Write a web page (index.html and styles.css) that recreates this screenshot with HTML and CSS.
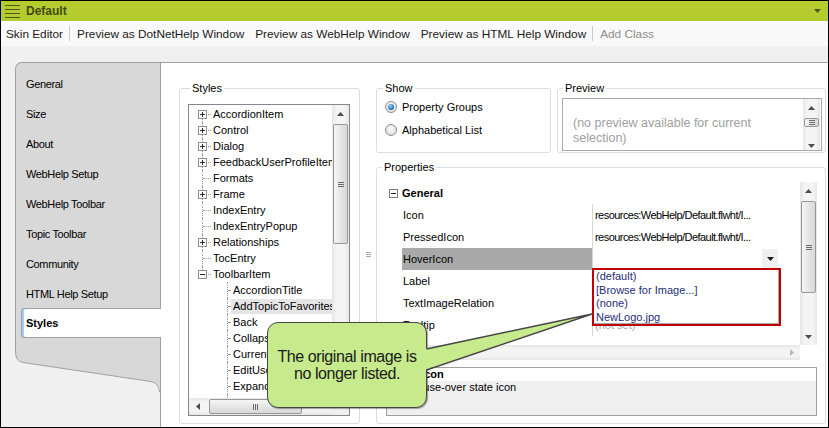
FILE: index.html
```html
<!DOCTYPE html>
<html>
<head>
<meta charset="utf-8">
<title>Default - Skin Editor</title>
<link rel="stylesheet" href="styles.css">
</head>
<body>
<div class="app">
  <header class="titlebar">
    <svg class="menu" width="15" height="14" viewBox="0 0 15 14"><path d="M0 1.5H15M0 5.5H15M0 9.5H15M0 13.5H15" stroke="#4b5816" stroke-width="1"/></svg>
    <span class="title">Default</span>
    <svg class="tb-arrow" width="7" height="4" viewBox="0 0 7 4"><path d="M0 0H7L3.5 4Z" fill="#4b5816"/></svg>
  </header>

  <nav class="toolbar">
    <span class="tool">Skin Editor</span>
    <span class="sep"></span>
    <span class="tool">Preview as DotNetHelp Window</span>
    <span class="tool">Preview as WebHelp Window</span>
    <span class="tool">Preview as HTML Help Window</span>
    <span class="sep"></span>
    <span class="tool disabled">Add Class</span>
  </nav>

  <main class="main">
    <aside class="tabs">
      <ul class="tablist">
        <li class="tab">General</li>
        <li class="tab">Size</li>
        <li class="tab">About</li>
        <li class="tab">WebHelp Setup</li>
        <li class="tab">WebHelp Toolbar</li>
        <li class="tab">Topic Toolbar</li>
        <li class="tab">Community</li>
        <li class="tab">HTML Help Setup</li>
        <li class="tab active">Styles</li>
      </ul>
      <svg class="tail" width="145" height="46" viewBox="0 0 145 46">
        <path d="M0 0V6Q0.5 15 8 16.5L136 35.5Q144 37 145 44V0Z" fill="#d8d8d8"/>
        <path d="M0.5 0V6Q0.5 15 8 16.5L136 35.5Q144 37 144.5 46" fill="none" stroke="#a0a0a0" stroke-width="1"/>
      </svg>
    </aside>

    <section class="content">
      <div class="group styles-group">
        <div class="legend">Styles</div>
        <div class="treebox">
          <div class="tree">
            <div class="node"><span class="br first"><i class="pm plus"></i></span><span class="lbl">AccordionItem</span></div>
            <div class="node"><span class="br"><i class="pm plus"></i></span><span class="lbl">Control</span></div>
            <div class="node"><span class="br"><i class="pm plus"></i></span><span class="lbl">Dialog</span></div>
            <div class="node"><span class="br"><i class="pm plus"></i></span><span class="lbl">FeedbackUserProfileItem</span></div>
            <div class="node"><span class="br"></span><span class="lbl">Formats</span></div>
            <div class="node"><span class="br"><i class="pm plus"></i></span><span class="lbl">Frame</span></div>
            <div class="node"><span class="br"></span><span class="lbl">IndexEntry</span></div>
            <div class="node"><span class="br"></span><span class="lbl">IndexEntryPopup</span></div>
            <div class="node"><span class="br"><i class="pm plus"></i></span><span class="lbl">Relationships</span></div>
            <div class="node"><span class="br"></span><span class="lbl">TocEntry</span></div>
            <div class="node"><span class="br last"><i class="pm minus"></i></span><span class="lbl">ToolbarItem</span></div>
            <div class="node"><span class="br none"></span><span class="br l1"></span><span class="lbl">AccordionTitle</span></div>
            <div class="node"><span class="br none"></span><span class="br l1"></span><span class="lbl hot">AddTopicToFavorites</span></div>
            <div class="node"><span class="br none"></span><span class="br l1"></span><span class="lbl">Back</span></div>
            <div class="node"><span class="br none"></span><span class="br l1"></span><span class="lbl">CollapseAll</span></div>
            <div class="node"><span class="br none"></span><span class="br l1"></span><span class="lbl">CurrentTopicIndex</span></div>
            <div class="node"><span class="br none"></span><span class="br l1"></span><span class="lbl">EditUserProfile</span></div>
            <div class="node"><span class="br none"></span><span class="br l1"></span><span class="lbl">ExpandAll</span></div>
            <div class="node"><span class="br none"></span><span class="br l1"></span><span class="lbl">Favorites</span></div>
          </div>
          <div class="vs tree-vs">
            <span class="sb"><svg width="7" height="4" viewBox="0 0 7 4"><path d="M0 4L3.5 0L7 4Z" fill="#4d4d4d"/></svg></span>
            <span class="thumb v"><svg width="6" height="5" viewBox="0 0 6 5"><path d="M0 0.5H6M0 2.5H6M0 4.5H6" stroke="#6a6a6a" stroke-width="1"/></svg></span>
          </div>
          <div class="hs tree-hs">
            <span class="sb"><svg width="4" height="7" viewBox="0 0 4 7"><path d="M4 0L0 3.5L4 7Z" fill="#4d4d4d"/></svg></span>
            <span class="thumb h"><svg width="5" height="6" viewBox="0 0 5 6"><path d="M0.5 0V6M2.5 0V6M4.5 0V6" stroke="#6a6a6a" stroke-width="1"/></svg></span>
          </div>
          <div class="corner"></div>
        </div>
      </div>

      <div class="splitter"><svg width="5" height="5" viewBox="0 0 5 5"><path d="M0 0.5H5M0 2.5H5M0 4.5H5" stroke="#a8a8a8" stroke-width="1"/></svg></div>

      <div class="rightcol">
        <div class="toprow">
          <div class="group show-group">
            <div class="legend">Show</div>
            <div class="radio-row"><span class="radio on"></span>Property Groups</div>
            <div class="radio-row"><span class="radio"></span>Alphabetical List</div>
          </div>
          <div class="group preview-group">
            <div class="legend">Preview</div>
            <div class="previewbox">
              <div class="preview-text">(no preview available for current selection)</div>
              <div class="vs preview-vs">
                <span class="sb up"><svg width="7" height="4" viewBox="0 0 7 4"><path d="M0 4L3.5 0L7 4Z" fill="#4d4d4d"/></svg></span>
                <span class="thumb v small"><svg width="6" height="5" viewBox="0 0 6 5"><path d="M0 0.5H6M0 2.5H6M0 4.5H6" stroke="#6a6a6a" stroke-width="1"/></svg></span>
                <span class="spacer"></span>
                <span class="sb down"><svg width="7" height="4" viewBox="0 0 7 4"><path d="M0 0H7L3.5 4Z" fill="#4d4d4d"/></svg></span>
              </div>
            </div>
          </div>
        </div>

        <div class="group props-group">
          <div class="legend">Properties</div>
          <div class="pgrid">
            <div class="prows">
              <div class="cat"><span class="pmbox"></span>General</div>
              <div class="prow"><span class="pname">Icon</span><span class="pval">resources:WebHelp/Default.flwht/I...</span></div>
              <div class="prow"><span class="pname">PressedIcon</span><span class="pval">resources:WebHelp/Default.flwht/I...</span></div>
              <div class="prow sel"><span class="pname">HoverIcon</span><span class="pval"><span class="ddbtn"><svg width="7" height="4" viewBox="0 0 7 4"><path d="M0 0H7L3.5 4Z" fill="#1a1a1a"/></svg></span></span></div>
              <div class="prow"><span class="pname">Label</span><span class="pval"></span></div>
              <div class="prow"><span class="pname">TextImageRelation</span><span class="pval"></span></div>
              <div class="prow"><span class="pname">Tooltip</span><span class="pval notset">(not set)</span></div>
            </div>
            <div class="vs props-vs">
              <span class="sb"><svg width="7" height="4" viewBox="0 0 7 4"><path d="M0 4L3.5 0L7 4Z" fill="#4d4d4d"/></svg></span>
              <span class="thumb v tall"><svg width="6" height="5" viewBox="0 0 6 5"><path d="M0 0.5H6M0 2.5H6M0 4.5H6" stroke="#6a6a6a" stroke-width="1"/></svg></span>
              <span class="spacer"></span>
              <span class="sb"><svg width="7" height="4" viewBox="0 0 7 4"><path d="M0 0H7L3.5 4Z" fill="#4d4d4d"/></svg></span>
            </div>
            <div class="hs props-hs">
              <span class="sb"><svg width="4" height="7" viewBox="0 0 4 7"><path d="M0 0L4 3.5L0 7Z" fill="#b8b8b8"/></svg></span>
            </div>
            <div class="corner white"></div>
          </div>
          <div class="desc">
            <div class="desc-title">HoverIcon</div>
            <div class="desc-text">Mouse-over state icon</div>
          </div>
        </div>
      </div>
    </section>
  </main>

  <div class="ddlist">
    <div>(default)</div>
    <div>[Browse for Image...]</div>
    <div>(none)</div>
    <div>NewLogo.jpg</div>
  </div>

  <div class="callout">The original image is<br>no longer listed.</div>
  <svg class="pointer" width="180" height="70" viewBox="0 0 180 70">
    <polygon points="4,41 172,6 4,62" fill="#c6ea8c"/>
    <path d="M6.5 41L172 6L6.5 62" fill="none" stroke="#464646" stroke-width="1.5" stroke-linejoin="round"/>
  </svg>
</div>
</body>
</html>
```

FILE: styles.css
```css
body {
  margin: 0;
}

.app {
  position: relative;
  width: 829px;
  height: 428px;
  box-sizing: border-box;
  border: 1px solid #000;
  overflow: hidden;
  display: flex;
  flex-direction: column;
  background: #f0f0f0;
  font-family: "Liberation Sans", Arial, sans-serif;
  font-size: 11px;
  color: #000;
}

/* title bar */
.titlebar {
  flex: none;
  height: 20px;
  display: flex;
  align-items: center;
  padding-left: 4px;
  background: #b5cc2e;
}
.menu { display: block; margin-right: 6px; }
.title { font-weight: bold; font-size: 12px; color: #3f4a0e; }
.tb-arrow { display: block; margin-left: auto; margin-right: 7px; }

/* toolbar */
.toolbar {
  flex: none;
  height: 25px;
  display: flex;
  align-items: center;
  background: #f9f9f9;
  font-size: 11.8px;
  color: #1a1a1a;
}
.tool { padding: 0 5px; margin-right: 1px; white-space: nowrap; }
.tool.disabled { color: #8d8d8d; }
.sep { width: 1px; height: 15px; background: #c9c9c9; margin: 0 2px 0 0; }

/* main */
.main {
  flex: 1;
  min-height: 0;
  display: flex;
  padding: 16px 0 0 14px;
}

.tabs {
  flex: none;
  width: 146px;
  box-sizing: border-box;
  border-right: 1px solid #a0a0a0;
  display: flex;
  flex-direction: column;
}
.tablist {
  list-style: none;
  margin: 0;
  padding: 6px 0 0;
  height: 284px;
  box-sizing: border-box;
  background: #d8d8d8;
  border-top: 1px solid #a0a0a0;
  border-left: 1px solid #a0a0a0;
  border-top-left-radius: 7px;
}
.tab {
  height: 30px;
  line-height: 30px;
  padding-left: 10px;
  letter-spacing: -0.35px;
  white-space: nowrap;
}
.tab.active {
  position: relative;
  height: 30px;
  box-sizing: border-box;
  line-height: 28px;
  margin: -1px -1px 0 5px;
  padding-left: 4px;
  background: #fff;
  border: 1px solid #a0a0a0;
  border-right: none;
  border-radius: 3px 0 0 3px;
  box-shadow: inset 2px 0 0 #9fcdf5;
  font-weight: bold;
  letter-spacing: 0;
}
.tail { display: block; }

/* content */
.content {
  flex: 1;
  min-width: 0;
  box-sizing: border-box;
  background: #fff;
  border-top: 1px solid #a0a0a0;
  padding: 25px 2px 3px 18px;
  display: grid;
  grid-template-columns: 181px 16px 450px;
}

.group {
  box-sizing: border-box;
  border: 1px solid #d5dfe5;
  border-radius: 3px;
  display: flex;
  flex-direction: column;
  min-width: 0;
}
.legend {
  align-self: flex-start;
  height: 14px;
  line-height: 14px;
  margin-top: -8px;
  padding: 0 2px;
  background: #fff;
  white-space: nowrap;
}

/* styles tree */
.styles-group { padding: 0 9px 0 8px; }
.styles-group .legend { margin-left: 2px; }
.treebox {
  margin-top: 9px;
  height: 312px;
  box-sizing: border-box;
  border: 1px solid #828790;
  display: grid;
  grid-template-columns: 1fr 17px;
  grid-template-rows: 1fr 17px;
  min-height: 0;
}
.tree {
  overflow: hidden;
  padding-top: 1px;
  min-width: 0;
}
.node {
  display: flex;
  height: 16px;
  align-items: center;
  padding-left: 7px;
  white-space: nowrap;
}
.br {
  position: relative;
  flex: none;
  width: 15px;
  height: 16px;
}
.br::before {
  content: "";
  position: absolute;
  left: 6px;
  top: 0;
  bottom: 0;
  border-left: 1px dotted #9a9a9a;
}
.br::after {
  content: "";
  position: absolute;
  left: 7px;
  right: 0;
  top: 8px;
  border-top: 1px dotted #9a9a9a;
}
.br.first::before { top: 8px; }
.br.last::before { bottom: 8px; }
.br.none::before,
.br.none::after { display: none; }
.br.l1 { width: 20px; }
.br.l1::before { left: 16px; }
.br.l1::after { left: 17px; right: 1px; }
.pm {
  position: absolute;
  z-index: 1;
  left: 2px;
  top: 4px;
  width: 9px;
  height: 9px;
  box-sizing: border-box;
  border: 1px solid #919191;
  background: #fff;
}
.pm::before {
  content: "";
  position: absolute;
  left: 1px;
  top: 3px;
  width: 5px;
  height: 1px;
  background: #2b2b2b;
}
.pm.plus::after {
  content: "";
  position: absolute;
  left: 3px;
  top: 1px;
  width: 1px;
  height: 5px;
  background: #2b2b2b;
}
.lbl { padding-left: 2px; padding-right: 2px; line-height: 15px; }
.lbl.hot { background: #e5e5e5; }

/* scrollbars */
.vs {
  display: flex;
  flex-direction: column;
  background: linear-gradient(to right, #e6e6e6, #f4f4f4 25%, #f4f4f4 75%, #e6e6e6);
  min-height: 0;
  overflow: hidden;
}
.hs {
  display: flex;
  background: linear-gradient(to bottom, #e6e6e6, #f4f4f4 25%, #f4f4f4 75%, #e6e6e6);
  min-width: 0;
  overflow: hidden;
}
.sb {
  flex: none;
  height: 17px;
  display: flex;
  align-items: center;
  justify-content: center;
}
.hs .sb { width: 17px; height: auto; }
.thumb {
  flex: none;
  box-sizing: border-box;
  border: 1px solid #979797;
  border-radius: 2px;
  display: flex;
  align-items: center;
  justify-content: center;
}
.thumb.v {
  margin: 0 1px;
  background: linear-gradient(to right, #f5f5f5, #e6e6e6 50%, #d8d8d8);
}
.thumb.h {
  margin: 1px 0 1px 3px;
  width: 93px;
  background: linear-gradient(to bottom, #f5f5f5, #e6e6e6 50%, #d8d8d8);
}
.tree-vs .thumb { margin-top: 2px; height: 120px; }
.spacer { flex: 1; }
.corner { background: #f0f0f0; }
.corner.white { background: #fff; }

.splitter {
  display: flex;
  align-items: center;
  justify-content: center;
  padding-bottom: 4px;
}

/* right column */
.rightcol {
  display: flex;
  flex-direction: column;
  gap: 14px;
  min-height: 0;
}
.toprow {
  flex: none;
  height: 65px;
  display: flex;
  gap: 6px;
}
.show-group { width: 175px; flex: none; }
.show-group .legend { margin-left: 6px; }
.radio-row {
  display: flex;
  align-items: center;
  height: 23px;
  padding-left: 8px;
  white-space: nowrap;
}
.radio {
  flex: none;
  width: 12px;
  height: 12px;
  box-sizing: border-box;
  margin-right: 5px;
  border-radius: 50%;
  border: 1px solid #8f8f8f;
  background: radial-gradient(circle at 50% 40%, #fbfbfb, #d6d6d6);
  display: flex;
  align-items: center;
  justify-content: center;
}
.radio.on::after {
  content: "";
  width: 6px;
  height: 6px;
  border-radius: 50%;
  background: radial-gradient(circle at 40% 35%, #9ad6ff, #1c72bd 65%, #0e4f8e);
}

.preview-group { flex: 1; min-width: 0; }
.preview-group .legend { margin-left: 5px; }
.previewbox {
  margin: 3px 3px 0 4px;
  height: 53px;
  box-sizing: border-box;
  border: 1px solid #a9a9a9;
  display: flex;
}
.preview-text {
  flex: 1;
  min-width: 0;
  overflow: hidden;
  padding: 17px 0 0 10px;
  font-size: 12.5px;
  line-height: 15px;
  color: #a0a0a0;
}
.preview-vs { flex: none; width: 17px; margin-right: 1px; }
.preview-vs .sb.up { height: 18px; }
.preview-vs .thumb { margin-top: 1px; height: 9px; }
.preview-vs .sb.down { height: 8px; }

/* properties */
.props-group { flex: 1; padding: 0 8px 7px 9px; min-height: 0; }
.props-group .legend { margin-left: -4px; }
.pgrid {
  flex: none;
  margin-top: 8px;
  height: 178px;
  display: grid;
  grid-template-columns: 1fr 17px;
  grid-template-rows: 163px 15px;
}
.prows { overflow: hidden; background: #fff; min-width: 0; }
.cat {
  height: 22px;
  display: flex;
  align-items: center;
  padding-left: 3px;
  font-weight: bold;
}
.pmbox {
  position: relative;
  flex: none;
  width: 9px;
  height: 9px;
  box-sizing: border-box;
  border: 1px solid #7a7a7a;
  margin-right: 4px;
}
.pmbox::before {
  content: "";
  position: absolute;
  left: 1px;
  top: 3px;
  width: 5px;
  height: 1px;
  background: #222;
}
.prow {
  height: 22px;
  display: flex;
  padding-left: 16px;
  white-space: nowrap;
}
.pname {
  flex: none;
  width: 190px;
  box-sizing: border-box;
  padding-left: 1px;
  line-height: 22px;
}
.prow.sel .pname { background: #a9a9a9; }
.pval {
  flex: none;
  width: 188px;
  box-sizing: border-box;
  border-left: 1px solid #d6d6d6;
  padding-left: 2px;
  display: flex;
  align-items: center;
  overflow: hidden;
  letter-spacing: -0.55px;
}
.pval.notset { color: #a6a6a6; letter-spacing: 0; }
.ddbtn {
  margin-left: auto;
  margin-right: 2px;
  width: 16px;
  height: 20px;
  background: #f0f0f0;
  display: flex;
  align-items: center;
  justify-content: center;
}
.props-vs .thumb { margin-top: 2px; height: 92px; }
.props-hs { justify-content: flex-end; }

.desc {
  flex: none;
  margin-top: 7px;
  height: 49px;
  box-sizing: border-box;
  border: 1px solid #a0a0a0;
  background: #f0f0f0;
}
.desc-title {
  height: 13px;
  line-height: 13px;
  background: #fff;
  font-weight: bold;
  padding-left: 3px;
}
.desc-text {
  line-height: 13px;
  padding-left: 21px;
}

/* overlays */
.ddlist {
  position: absolute;
  left: 591px;
  top: 267px;
  width: 189px;
  height: 58px;
  box-sizing: border-box;
  border: 2px solid #c00000;
  box-shadow: inset -1px -1px 0 #a8a8a8;
  background: #fff;
  padding-left: 2px;
  line-height: 13.5px;
  color: #1f2e7a;
  white-space: nowrap;
}

.callout {
  position: absolute;
  left: 266px;
  top: 321px;
  width: 160px;
  height: 86px;
  box-sizing: border-box;
  border: 1.5px solid #464646;
  border-radius: 11px;
  background: #c6ea8c;
  box-shadow: 1px 1px 1px rgba(0, 0, 0, 0.35);
  display: flex;
  align-items: center;
  justify-content: center;
  text-align: center;
  font-size: 16px;
  line-height: 17px;
  letter-spacing: -0.4px;
  color: #1a1a1a;
}
.pointer {
  position: absolute;
  left: 419px;
  top: 307px;
}
```
